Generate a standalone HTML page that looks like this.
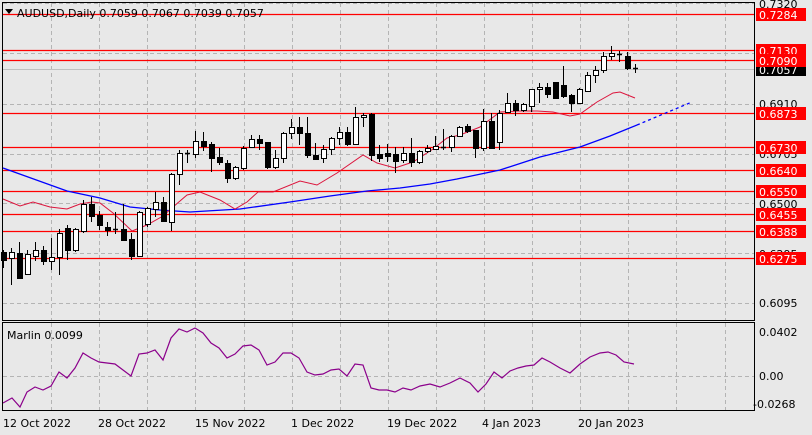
<!DOCTYPE html>
<html><head><meta charset="utf-8"><style>
html,body{margin:0;padding:0;background:#e8e8e8;}
svg{display:block;font-family:"DejaVu Sans","Liberation Sans",sans-serif;}
</style></head><body>
<svg id="s" width="812" height="435" xmlns="http://www.w3.org/2000/svg">
<rect width="812" height="435" fill="#e8e8e8"/>
<g id="grid" stroke="#b4b4b4" stroke-dasharray="4,3" stroke-width="1"></g>
<g id="hl"></g>
<line x1="3" y1="69.5" x2="755" y2="69.5" stroke="#c0c0c0"/>
<polyline id="blue" fill="none" stroke="#0000ff" stroke-width="1.3"/>
<polyline id="bluedot" fill="none" stroke="#0000ff" stroke-width="1.3" stroke-dasharray="3,3"/>
<polyline id="red" fill="none" stroke="#dc143c" stroke-width="1"/>
<g id="c"></g>
<polyline id="pur" fill="none" stroke="#8b008b" stroke-width="1.2"/>
<rect x="2.5" y="2.5" width="752" height="318" fill="none" stroke="#000"/>
<rect x="2.5" y="322.5" width="752" height="88" fill="none" stroke="#000"/>
<path d="M5 9 L13 9 L9 14 Z" fill="#000"/>
<text x="17" y="17" font-size="11" fill="#000">AUDUSD,Daily  0.7059 0.7067 0.7039 0.7057</text>
<text x="7" y="339" font-size="11" fill="#000">Marlin 0.0099</text>
<g font-size="11" fill="#000" id="ax">
<text x="759" y="8">0.7320</text>
<text x="759" y="108">0.6910</text>
<text x="759" y="158">0.6705</text>
<text x="759" y="208">0.6500</text>
<text x="759" y="258">0.6295</text>
<text x="759" y="307">0.6095</text>
<text x="759" y="336">0.0402</text>
<text x="759" y="380">0.00</text>
<text x="753" y="408">-0.0268</text>
</g>
<g id="lab" font-size="11" fill="#fff"></g>
<g font-size="11" fill="#000">
<text x="3" y="427">12 Oct 2022</text>
<text x="98" y="427">28 Oct 2022</text>
<text x="195" y="427">15 Nov 2022</text>
<text x="291" y="427">1 Dec 2022</text>
<text x="387" y="427">19 Dec 2022</text>
<text x="482" y="427">4 Jan 2023</text>
<text x="578" y="427">20 Jan 2023</text>
</g>
</svg>
<script>
var NS="http://www.w3.org/2000/svg";
function el(t,a,p){var e=document.createElementNS(NS,t);for(var k in a)e.setAttribute(k,a[k]);document.getElementById(p).appendChild(e);return e;}
// grid
[3,53,104,154,203,253,303].forEach(function(y){el("line",{x1:3,y1:y+.5,x2:755,y2:y+.5},"grid");});
el("line",{x1:3,y1:376.5,x2:755,y2:376.5},"grid");
for(var k=1;k<16;k++){var x=Math.round(3+48.1*k)+.5;if(x<755){el("line",{x1:x,y1:3,x2:x,y2:320},"grid");el("line",{x1:x,y1:323,x2:x,y2:410},"grid");}}
// red lines & labels
var L=[[14,"0.7284"],[50,"0.7130"],[60,"0.7090"],[113,"0.6873"],[147,"0.6730"],[170,"0.6640"],[191,"0.6550"],[214,"0.6455"],[231,"0.6388"],[258,"0.6275"]];
L.forEach(function(l){el("line",{x1:3,y1:l[0]+.5,x2:755,y2:l[0]+.5,stroke:"#ff0000","stroke-width":1.3},"hl");});
el("rect",{x:756,y:63,width:50,height:13,fill:"#000"},"lab");
var t0=el("text",{x:759,y:74},"lab");t0.textContent="0.7057";
L.forEach(function(l){el("rect",{x:756,y:l[0]-6,width:50,height:13,fill:"#ff0000"},"lab");var t=el("text",{x:759,y:l[0]+5},"lab");t.textContent=l[1];});
// candles [o,c,h,l]
var C=[[252,260,250,268],[258,252,248,285],[253,278,242,279],[274,254,250,275],[256,250,242,261],[250,261,246,265],[261,257,238,270],[257,233,229,275],[228,250,225,260],[250,229,228,252],[231,204,200,233],[204,216,197,222],[215,225,211,230],[227,230,222,236],[229,229,212,234],[229,240,204,241],[239,256,233,260],[256,212,211,257],[224,208,207,227],[209,202,192,217],[202,221,197,222],[222,174,173,231],[174,153,150,185],[153,153,150,163],[154,141,131,158],[141,146,132,151],[144,158,142,172],[157,162,148,165],[163,178,160,183],[178,167,166,180],[168,148,146,170],[147,139,135,148],[139,143,135,150],[142,167,142,169],[167,158,150,169],[158,133,132,163],[133,127,119,139],[127,133,117,145],[133,155,117,158],[155,159,143,160],[158,149,145,163],[149,138,137,155],[138,132,127,145],[132,144,127,146],[144,117,107,145],[117,115,113,127],[114,155,113,161],[154,158,145,162],[153,156,144,162],[154,161,147,173],[160,153,147,163],[153,162,138,167],[162,151,150,164],[151,148,145,153],[149,146,136,150],[147,147,129,150],[147,136,135,152],[136,127,126,137],[126,131,124,133],[130,148,130,158],[148,121,109,151],[121,148,113,149],[142,113,110,150],[112,103,93,113],[103,110,100,116],[110,104,103,112],[106,89,89,112],[89,87,83,103],[87,94,83,98],[82,98,82,99],[85,96,66,98],[95,103,94,112],[103,89,88,104],[91,75,72,92],[75,70,66,83],[70,56,52,73],[56,53,46,60],[54,54,51,62],[56,68,52,70],[68,68,64,73]];
C.forEach(function(c,i){var x=3+8*i;
 el("line",{x1:x+.5,y1:c[2],x2:x+.5,y2:c[3],stroke:"#000"},"c");
 var top=Math.min(c[0],c[1]),h=Math.abs(c[0]-c[1]);
 if(h<1){el("line",{x1:x-2,y1:top+.5,x2:x+3,y2:top+.5,stroke:"#000","stroke-width":1.5},"c");}
 else{var bull=c[1]<c[0];el("rect",{x:x-1.5,y:top+.5,width:5,height:h,fill:bull?"#fff":"#000",stroke:"#000"},"c");}
});
function pts(a){return a.map(function(p){return p.join(",")}).join(" ");}
document.getElementById("blue").setAttribute("points",pts([[3,168],[67,191],[100,198],[130,207],[160,210],[190,212],[240,209],[290,202],[330,196],[367,191],[400,188],[430,184],[457,179],[500,170],[540,157],[580,147],[610,136],[637,125]]));
document.getElementById("bluedot").setAttribute("points",pts([[637,125],[692,102]]));
document.getElementById("red").setAttribute("points",pts([[3,199],[20,206],[33,202],[50,207],[67,209],[80,204],[92,202],[100,203],[113,213],[132,231],[147,225],[163,216],[173,207],[187,195],[200,192],[220,200],[235,209],[247,202],[258,192],[273,192],[300,181],[317,185],[337,173],[363,155],[377,163],[395,168],[413,162],[433,149],[447,138],[460,135],[480,127],[500,112],[520,111],[537,111],[553,112],[570,116],[580,114],[597,102],[613,93],[620,92],[635,98]]));
document.getElementById("pur").setAttribute("points",pts([[3,403],[12,398],[20,407],[27,392],[35,387],[43,390],[51,386],[59,372],[67,378],[75,368],[83,353],[91,358],[99,362],[115,364],[123,370],[131,376],[139,354],[147,353],[155,350],[163,360],[171,338],[179,329],[187,332],[195,328],[203,333],[211,343],[219,348],[227,358],[235,354],[243,346],[251,345],[259,350],[267,365],[275,362],[283,353],[291,353],[299,358],[307,372],[315,375],[323,374],[331,370],[339,369],[347,376],[355,364],[363,365],[371,388],[379,390],[387,390],[395,392],[403,388],[411,390],[420,386],[430,384],[440,387],[450,383],[460,378],[470,383],[478,392],[486,384],[494,372],[502,378],[510,371],[518,368],[526,366],[534,365],[542,358],[550,362],[560,368],[570,373],[580,364],[590,357],[600,353],[608,352],[616,355],[624,362],[634,364]]));
</script>
</body></html>
